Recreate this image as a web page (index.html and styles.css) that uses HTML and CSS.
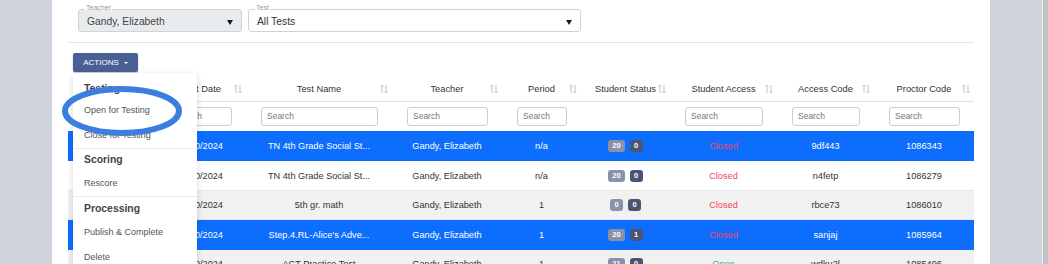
FILE: index.html
```html
<!DOCTYPE html>
<html lang="en">
<head>
<meta charset="utf-8">
<title>Tests</title>
<link rel="stylesheet" href="styles.css">
</head>
<body>
<div class="page">
  <div class="gutter"></div>
  <main class="panel">
    <div class="filters">
      <div class="select select-teacher is-disabled">
        <span class="select-label">Teacher</span>
        <span class="select-value">Gandy, Elizabeth</span>
        <span class="select-arrow"></span>
      </div>
      <div class="select select-test">
        <span class="select-label">Test</span>
        <span class="select-value">All Tests</span>
        <span class="select-arrow"></span>
      </div>
    </div>
    <hr class="divider">
    <div class="actions">
      <button class="actions-btn" type="button">ACTIONS <span class="caret"></span></button>
      <div class="menu">
        <div class="menu-title first">Testing</div>
        <div class="menu-item">Open for Testing</div>
        <div class="menu-item">Close for Testing</div>
        <div class="menu-sep"></div>
        <div class="menu-title short">Scoring</div>
        <div class="menu-item">Rescore</div>
        <div class="menu-sep"></div>
        <div class="menu-title">Processing</div>
        <div class="menu-item">Publish &amp; Complete</div>
        <div class="menu-item">Delete</div>
      </div>
      <svg class="mark" width="120" height="50" viewBox="0 0 120 50"><ellipse cx="60" cy="25" rx="57" ry="22" fill="none" stroke="#3b7ee0" stroke-width="6"/></svg>
    </div>
    <table class="grid">
      <colgroup>
        <col class="c0"><col class="c1"><col class="c2"><col class="c3"><col class="c4"><col class="c5"><col class="c6"><col class="c7"><col class="c8">
      </colgroup>
      <thead>
        <tr class="head">
          <th></th>
          <th><div class="th"><span></span><span>Start Date</span><svg class="sort" width="8" height="10" viewBox="0 0 8 10"><path d="M2 9V1M.6 2.4L2 1l1.4 1.4M6 1v8M4.6 7.6L6 9l1.4-1.4"/></svg></div></th>
          <th><div class="th"><span></span><span>Test Name</span><svg class="sort" width="8" height="10" viewBox="0 0 8 10"><path d="M2 9V1M.6 2.4L2 1l1.4 1.4M6 1v8M4.6 7.6L6 9l1.4-1.4"/></svg></div></th>
          <th><div class="th"><span></span><span>Teacher</span><svg class="sort" width="8" height="10" viewBox="0 0 8 10"><path d="M2 9V1M.6 2.4L2 1l1.4 1.4M6 1v8M4.6 7.6L6 9l1.4-1.4"/></svg></div></th>
          <th><div class="th"><span></span><span>Period</span><svg class="sort" width="8" height="10" viewBox="0 0 8 10"><path d="M2 9V1M.6 2.4L2 1l1.4 1.4M6 1v8M4.6 7.6L6 9l1.4-1.4"/></svg></div></th>
          <th><div class="th"><span></span><span>Student Status</span><svg class="sort" width="8" height="10" viewBox="0 0 8 10"><path d="M2 9V1M.6 2.4L2 1l1.4 1.4M6 1v8M4.6 7.6L6 9l1.4-1.4"/></svg></div></th>
          <th><div class="th"><span></span><span>Student Access</span><svg class="sort" width="8" height="10" viewBox="0 0 8 10"><path d="M2 9V1M.6 2.4L2 1l1.4 1.4M6 1v8M4.6 7.6L6 9l1.4-1.4"/></svg></div></th>
          <th><div class="th"><span></span><span>Access Code</span><svg class="sort" width="8" height="10" viewBox="0 0 8 10"><path d="M2 9V1M.6 2.4L2 1l1.4 1.4M6 1v8M4.6 7.6L6 9l1.4-1.4"/></svg></div></th>
          <th><div class="th"><span></span><span>Proctor Code</span><svg class="sort" width="8" height="10" viewBox="0 0 8 10"><path d="M2 9V1M.6 2.4L2 1l1.4 1.4M6 1v8M4.6 7.6L6 9l1.4-1.4"/></svg></div></th>
        </tr>
        <tr class="search">
          <th></th>
          <th><input class="search-input" placeholder="Search"></th>
          <th><input class="search-input" placeholder="Search"></th>
          <th><input class="search-input" placeholder="Search"></th>
          <th><input class="search-input" placeholder="Search"></th>
          <th></th>
          <th><input class="search-input" placeholder="Search"></th>
          <th><input class="search-input" placeholder="Search"></th>
          <th><input class="search-input" placeholder="Search"></th>
        </tr>
      </thead>
      <tbody>
        <tr class="row odd selected">
          <td></td><td>10/10/2024</td><td>TN 4th Grade Social St...</td><td>Gandy, Elizabeth</td><td>n/a</td>
          <td><span class="badges"><span class="badge light">20</span><span class="badge dark">0</span></span></td>
          <td class="closed">Closed</td><td>9df443</td><td>1086343</td>
        </tr>
        <tr class="row">
          <td></td><td>10/10/2024</td><td>TN 4th Grade Social St...</td><td>Gandy, Elizabeth</td><td>n/a</td>
          <td><span class="badges"><span class="badge light">20</span><span class="badge dark">0</span></span></td>
          <td class="closed">Closed</td><td>n4fetp</td><td>1086279</td>
        </tr>
        <tr class="row odd">
          <td></td><td>10/10/2024</td><td>5th gr. math</td><td>Gandy, Elizabeth</td><td>1</td>
          <td><span class="badges"><span class="badge light">0</span><span class="badge dark">0</span></span></td>
          <td class="closed">Closed</td><td>rbce73</td><td>1086010</td>
        </tr>
        <tr class="row selected">
          <td></td><td>10/10/2024</td><td>Step.4.RL-Alice's Adve...</td><td>Gandy, Elizabeth</td><td>1</td>
          <td><span class="badges"><span class="badge light">20</span><span class="badge dark">1</span></span></td>
          <td class="closed">Closed</td><td>sanjaj</td><td>1085964</td>
        </tr>
        <tr class="row odd">
          <td></td><td>10/09/2024</td><td>ACT Practice Test</td><td>Gandy, Elizabeth</td><td>1</td>
          <td><span class="badges"><span class="badge light">21</span><span class="badge dark">0</span></span></td>
          <td class="open">Open</td><td>wdku2l</td><td>1085496</td>
        </tr>
      </tbody>
    </table>
  </main>
  <div class="gutter"></div>
  <div class="scrollbar"></div>
</div>
</body>
</html>
```

FILE: styles.css
```css
* { box-sizing: border-box; }
html, body { margin: 0; height: 264px; overflow: hidden; }
body { font-family: "Liberation Sans", Arial, sans-serif; color: #333; background: #cfd3de; }

.page {
  display: grid;
  grid-template-columns: 52px 938px 52px 6px;
  height: 264px;
}
.gutter { background: #cfd3de; }
.scrollbar { background: #c2c2c2; border-left: 1px solid #ececec; }

.panel {
  background: #fff;
  padding: 9px 16px 0;
  min-width: 0;
}

/* filters */
.filters { display: flex; gap: 6px; padding-left: 10px; }
.select {
  position: relative;
  height: 23px;
  border: 1px solid #d2d2d2;
  border-radius: 3px;
  display: flex;
  align-items: center;
  padding: 1px 8px 0 8px;
  background: #fff;
}
.select-teacher { width: 164px; }
.select-test { width: 333px; }
.select.is-disabled { background: #e9ecef; }
.select-label {
  position: absolute;
  left: 6px;
  top: -6px;
  padding: 0 1px;
  height: 6px;
  font-size: 7px;
  line-height: 7px;
  color: #9a9a9a;
  background: #fff;
}
.select-value { font-size: 10.3px; color: #444; }
.select-test .select-value { color: #333; }
.select-arrow {
  margin-left: auto;
  width: 0; height: 0;
  border-left: 3px solid transparent;
  border-right: 3px solid transparent;
  border-top: 5px solid #1a1a1a;
  margin-top: 2px;
}

.divider { border: 0; border-top: 1px solid #e4e4e4; margin: 10px 0 0; }

/* actions */
.actions { position: relative; width: 65px; margin: 10px 0 0 5px; }
.actions-btn {
  width: 65px;
  height: 19px;
  border: 0;
  border-radius: 2px;
  background: #4a5f96;
  box-shadow: 0 1px 2px rgba(0,0,0,.25);
  color: #fff;
  font-family: inherit;
  font-size: 8px;
  display: flex;
  align-items: center;
  justify-content: center;
  gap: 5px;
  padding: 0;
}
.caret {
  width: 0; height: 0;
  border-left: 2px solid transparent;
  border-right: 2px solid transparent;
  border-top: 2.5px solid #fff;
}
.menu {
  position: absolute;
  left: 0;
  top: 20px;
  width: 124px;
  padding-top: 2px;
  background: #fff;
  box-shadow: 0 2px 6px rgba(0,0,0,.16);
  border-radius: 2px;
  z-index: 5;
}
.menu-title {
  height: 23px;
  line-height: 23px;
  padding: 0 11px;
  font-size: 10.4px;
  font-weight: bold;
  color: #444;
}
.menu-title.first { line-height: 27px; }
.menu-title.short { height: 22px; line-height: 22px; }
.menu-item {
  height: 25px;
  line-height: 25px;
  padding: 0 11px;
  font-size: 9px;
  color: #555;
}
.menu-sep { height: 1px; background: #ececec; }
.mark { position: absolute; left: -11px; top: 33px; z-index: 6; }

/* table */
.grid {
  width: 100%;
  table-layout: fixed;
  border-collapse: collapse;
  margin-top: 5px;
}
.c0 { width: 86px; } .c1 { width: 92px; } .c2 { width: 146px; }
.c3 { width: 110px; } .c4 { width: 79px; } .c5 { width: 89px; }
.c6 { width: 107px; } .c7 { width: 97px; } .c8 { width: 100px; }

.head th {
  height: 24px;
  padding: 1px 0 0;
  font-size: 9.3px;
  font-weight: normal;
  color: #333;
  border-bottom: 1px solid #e2e2e2;
  white-space: nowrap;
}
.th {
  display: grid;
  grid-template-columns: 12px 1fr 12px;
  align-items: center;
  text-align: center;
}
.sort { justify-self: start; }
.sort path { stroke: #c3c3c3; fill: none; stroke-width: 1; }

.search th { height: 30px; padding: 0 14px 0 15px; font-weight: normal; }
.search-input {
  display: block;
  width: 100%;
  height: 19px;
  border: 1px solid #cdcdcd;
  border-radius: 3px;
  padding: 0 5px;
  font-family: inherit;
  font-size: 8.5px;
  color: #333;
  background: #fff;
}
.search-input::placeholder { color: #777; }

.row td {
  height: 29.5px;
  padding: 1px 0 0;
  text-align: center;
  font-size: 9.2px;
  color: #333;
  white-space: nowrap;
  overflow: hidden;
  border-bottom: 1px solid #e6e6e6;
}
.row.odd td { background: #f1f1f1; }
.row.selected td { background: #0d6efd; color: #fff; border-bottom-color: #0d6efd; }
.row td.closed { color: #f14668; }
.row td.open { color: #33c06a; }

.badges { display: inline-flex; gap: 5px; vertical-align: middle; }
.badge {
  min-width: 13px;
  height: 12px;
  padding: 0 4px;
  border-radius: 3px;
  font-size: 7.5px;
  font-weight: bold;
  line-height: 12px;
  color: #fff;
  text-align: center;
}
.badge.light { background: #8b91a9; }
.badge.dark { background: #4c5472; }
```
